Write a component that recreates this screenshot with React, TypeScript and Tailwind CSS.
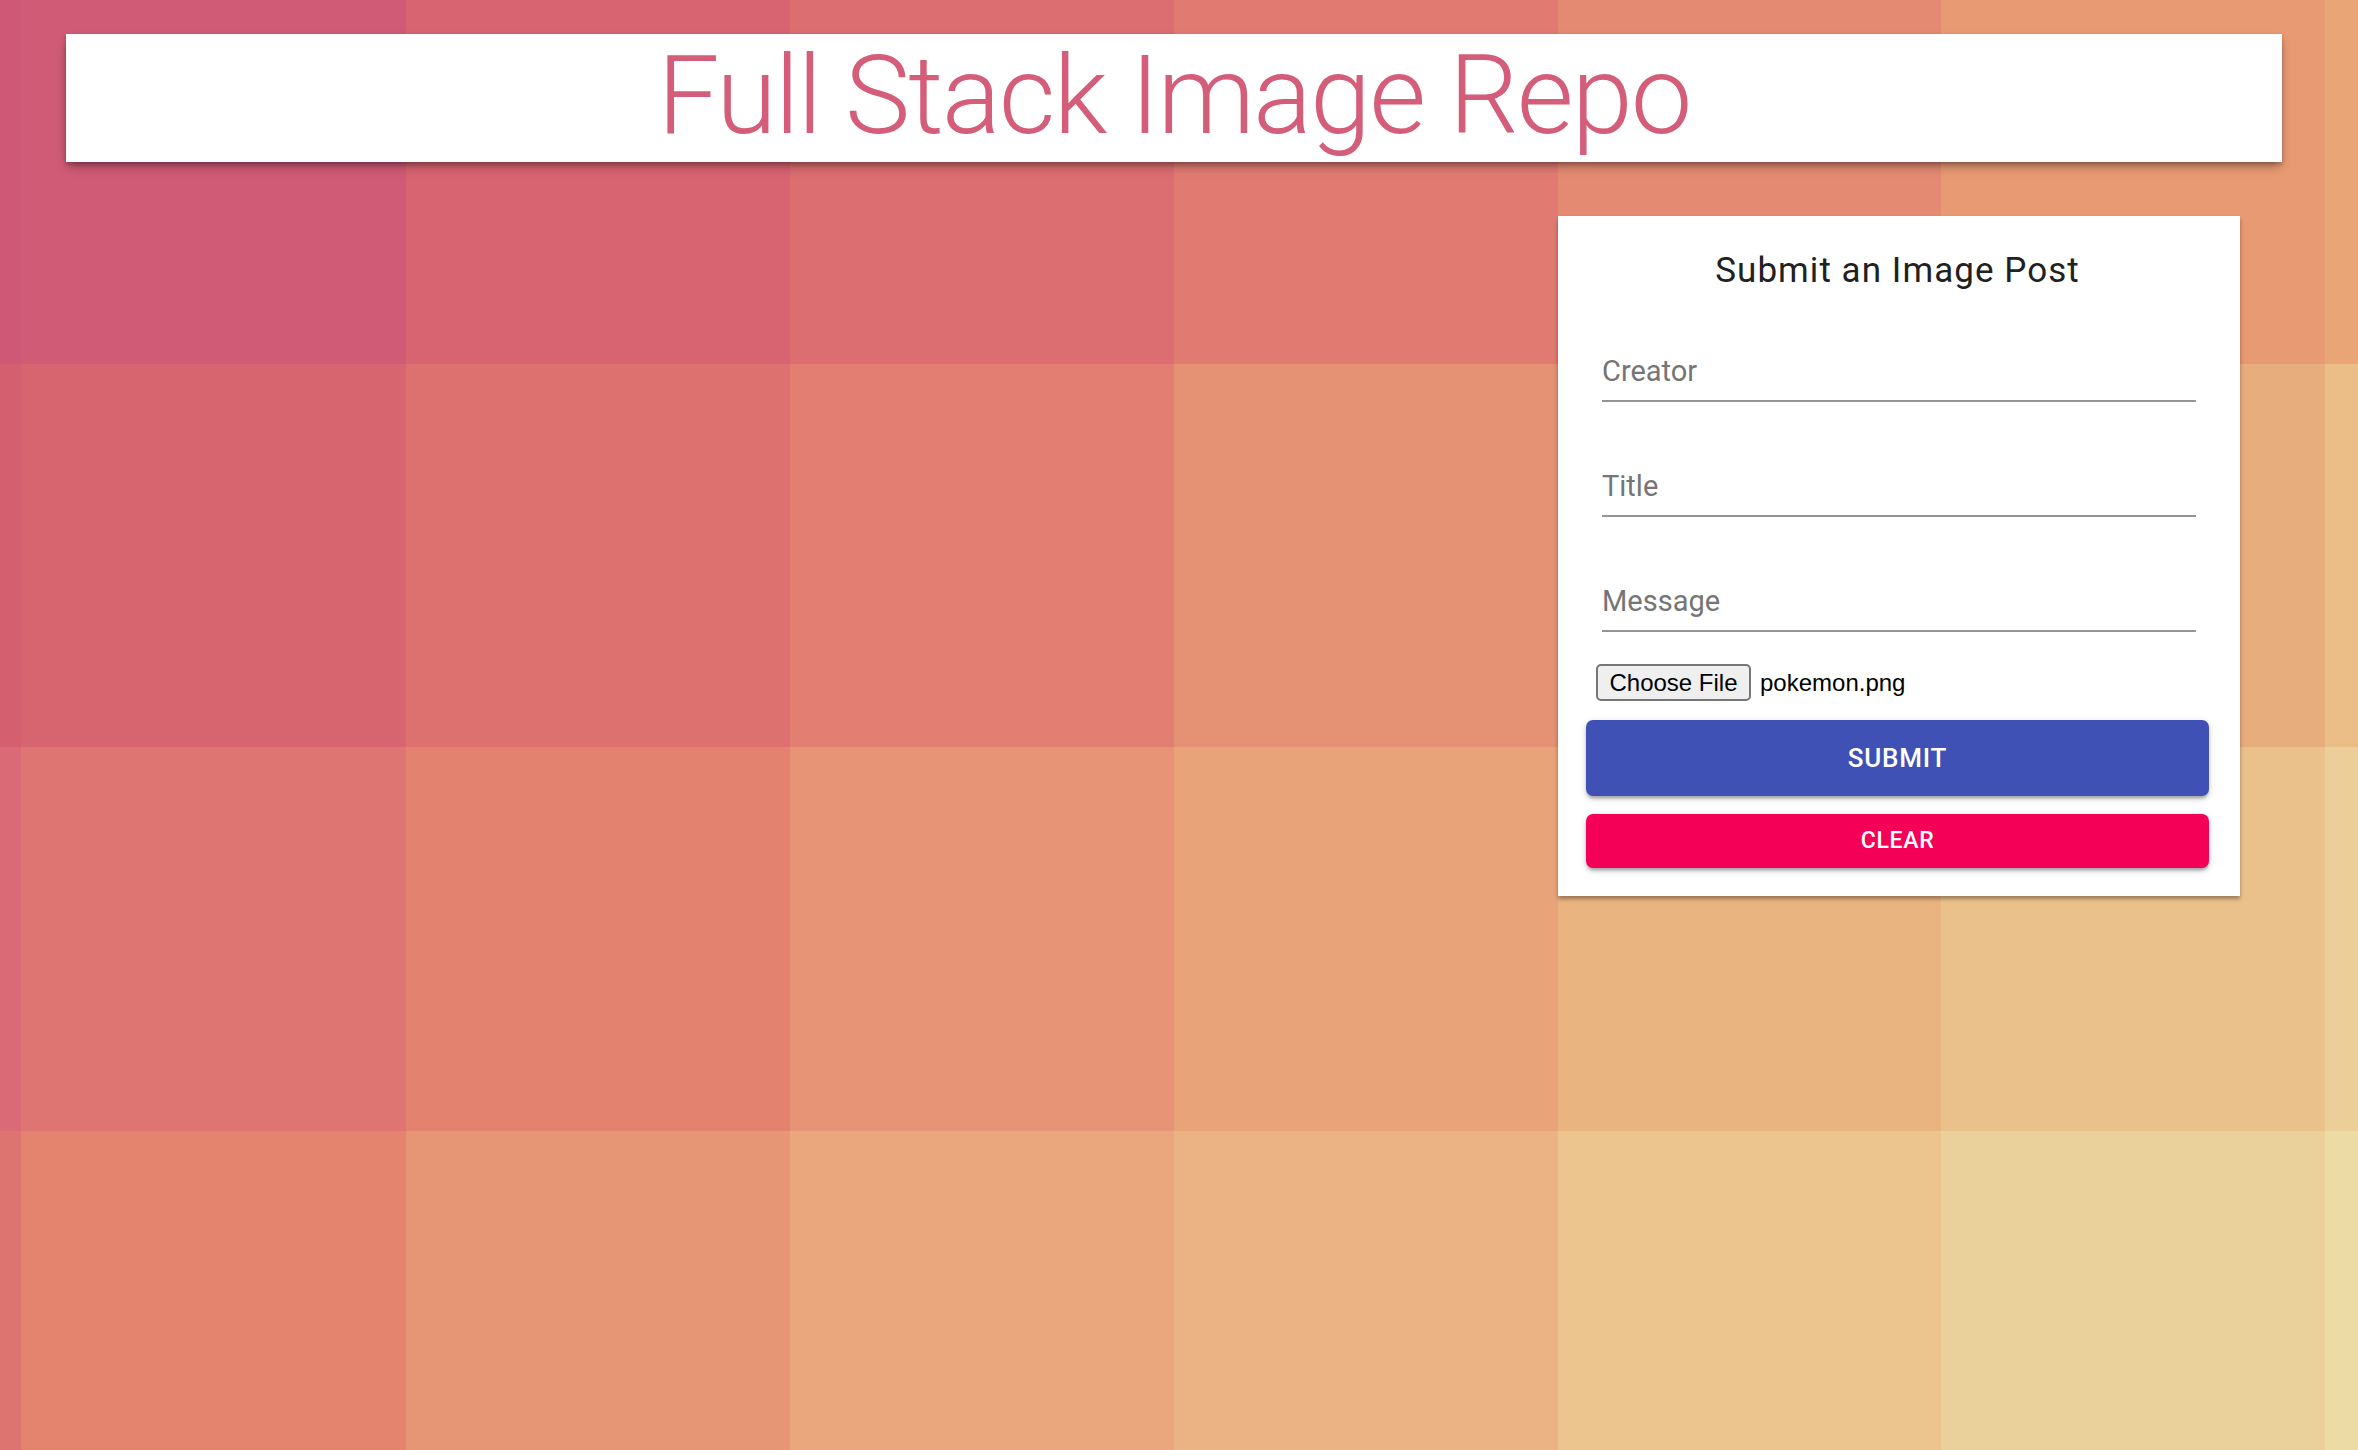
import React from "react";

const colEdges = [0, 21, 406, 790, 1174, 1558, 1941, 2325, 2358];
const rowEdges = [0, 364, 747, 1131, 1450];

const tileColors = [
  ["#cf5877", "#d05b76", "#d86472", "#dc6d70", "#e17b72", "#e48a72", "#e89a72", "#eaa576"],
  ["#d4606f", "#d6656f", "#dc7170", "#e27e72", "#e59174", "#e79f76", "#e8ad7d", "#ecbe87"],
  ["#d96a76", "#df7572", "#e3826f", "#e69475", "#e8a478", "#eab480", "#ebc18b", "#ecce99"],
  ["#dd7470", "#e4846f", "#e69674", "#eaa67c", "#ebb383", "#ecc48d", "#ead09a", "#eddba6"],
];

function TileBackground() {
  return (
    <svg
      className="absolute inset-0 h-full w-full"
      viewBox="0 0 2358 1450"
      preserveAspectRatio="none"
    >
      {tileColors.map((row, r) =>
        row.map((fill, c) => (
          <rect
            key={`${r}-${c}`}
            x={colEdges[c]}
            y={rowEdges[r]}
            width={colEdges[c + 1] - colEdges[c]}
            height={rowEdges[r + 1] - rowEdges[r]}
            fill={fill}
          />
        ))
      )}
    </svg>
  );
}

function Field({ label, className = "" }: { label: string; className?: string }) {
  return (
    <div className={`ml-[16px] w-[594px] border-b-2 border-[#949494] pb-[11px] ${className}`}>
      <span className="block text-[29px] leading-[36px] text-[#757575]">{label}</span>
    </div>
  );
}

function PostForm() {
  return (
    <div className="w-[682px] bg-white pl-[28px] pr-[31px] pt-[35px] pb-[28px] shadow-[0_3px_4px_rgba(0,0,0,0.35)]">
      <h2 className="text-center text-[35px] leading-[40px] font-normal tracking-[0.03em] text-[#212121]">
        Submit an Image Post
      </h2>

      <Field label="Creator" className="mt-[62px]" />
      <Field label="Title" className="mt-[66px]" />
      <Field label="Message" className="mt-[66px]" />

      <div className="mt-[32px] ml-[10px] flex items-center gap-[9px] font-['Liberation_Sans',Arial,sans-serif] text-[24px] text-black">
        <span className="flex h-[37px] w-[155px] items-center justify-center rounded-[5px] border-2 border-[#767676] bg-[#efefef] leading-none">
          Choose File
        </span>
        <span className="leading-none">pokemon.png</span>
      </div>

      <button className="mt-[19px] flex h-[76px] w-full items-center justify-center rounded-[7px] bg-[#3f51b5] text-[26px] font-medium tracking-[0.03em] text-white shadow-[0_4px_3px_-2px_rgba(0,0,0,0.2),0_3px_4px_0_rgba(0,0,0,0.14),0_2px_8px_0_rgba(0,0,0,0.12)]">
        SUBMIT
      </button>
      <button className="mt-[18px] flex h-[54px] w-full items-center justify-center rounded-[7px] bg-[#f50057] text-[23px] font-medium tracking-[0.03em] text-white shadow-[0_4px_3px_-2px_rgba(0,0,0,0.2),0_3px_4px_0_rgba(0,0,0,0.14),0_2px_8px_0_rgba(0,0,0,0.12)]">
        CLEAR
      </button>
    </div>
  );
}

export default function App() {
  return (
    <div className="relative min-h-screen overflow-hidden font-[Roboto,sans-serif]">
      <TileBackground />

      <div className="relative pt-[34px] pl-[66px] pr-[76px]">
        <header className="bg-white pb-[4px] text-center shadow-[0_6px_10px_-2px_rgba(0,0,0,0.35),0_2px_4px_rgba(0,0,0,0.2)]">
          <h1 className="text-[110px] leading-[124px] font-light tracking-[-0.018em] text-[#d45e7a]">
            Full Stack Image Repo
          </h1>
        </header>

        <div className="mt-[54px] flex justify-end pr-[42px]">
          <PostForm />
        </div>
      </div>
    </div>
  );
}
